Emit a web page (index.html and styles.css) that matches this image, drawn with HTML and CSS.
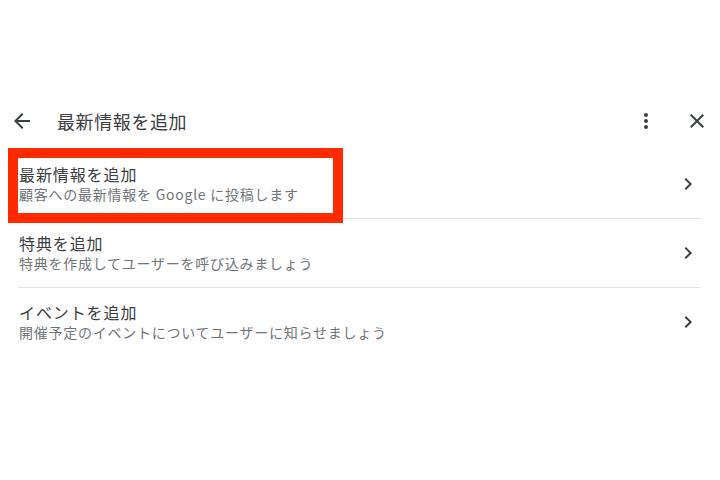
FILE: index.html
```html
<!DOCTYPE html>
<html>
<head>
    <title>最新情報を追加</title>
    <link rel="stylesheet" href="styles.css">
</head>
<body>

    <div class="screen">
        <div class="toolbar">
            <svg class="icon back" viewBox="0 0 24 24"><path d="M20 11H7.83l5.59-5.59L12 4l-8 8 8 8 1.41-1.41L7.83 13H20v-2z"/></svg>
            <div class="toolbar-title">最新情報を追加</div>
            <svg class="icon more" viewBox="0 0 24 24"><path d="M12 8c1.1 0 2-.9 2-2s-.9-2-2-2-2 .9-2 2 .9 2 2 2zm0 2c-1.1 0-2 .9-2 2s.9 2 2 2 2-.9 2-2-.9-2-2-2zm0 6c-1.1 0-2 .9-2 2s.9 2 2 2 2-.9 2-2-.9-2-2-2z"/></svg>
            <svg class="icon close" viewBox="0 0 24 24"><path d="M19 6.41L17.59 5 12 10.59 6.41 5 5 6.41 10.59 12 5 17.59 6.41 19 12 13.41 17.59 19 19 17.59 13.41 12z"/></svg>
        </div>

        <div class="list">
            <div class="item">
                <div class="item-text">
                    <div class="item-title">最新情報を追加</div>
                    <div class="item-sub">顧客への最新情報を Google に投稿します</div>
                </div>
                <svg class="icon chevron" viewBox="0 0 24 24"><path d="M10 6L8.59 7.41 13.17 12l-4.58 4.59L10 18l6-6z"/></svg>
            </div>
            <div class="item">
                <div class="item-text">
                    <div class="item-title">特典を追加</div>
                    <div class="item-sub">特典を作成してユーザーを呼び込みましょう</div>
                </div>
                <svg class="icon chevron" viewBox="0 0 24 24"><path d="M10 6L8.59 7.41 13.17 12l-4.58 4.59L10 18l6-6z"/></svg>
            </div>
            <div class="item">
                <div class="item-text">
                    <div class="item-title">イベントを追加</div>
                    <div class="item-sub">開催予定のイベントについてユーザーに知らせましょう</div>
                </div>
                <svg class="icon chevron" viewBox="0 0 24 24"><path d="M10 6L8.59 7.41 13.17 12l-4.58 4.59L10 18l6-6z"/></svg>
            </div>
        </div>

        <div class="highlight"></div>
    </div>

</body>
</html>
```

FILE: styles.css
```css
body {
    margin: 0;
    background: #fff;
    font-family: "Noto Sans CJK JP", "Noto Sans", sans-serif;
    color: #202124;
}

.screen {
    position: relative;
    width: 720px;
    height: 480px;
    padding-top: 97px;
    box-sizing: border-box;
}

.icon {
    width: 24px;
    height: 24px;
    fill: #3c4043;
    flex-shrink: 0;
}

.toolbar {
    display: flex;
    align-items: center;
    height: 48px;
    padding: 0 11px 0 10px;
}

.toolbar-title {
    flex: 1;
    margin-left: 23px;
    font-size: 18px;
    letter-spacing: 0.6px;
    color: #3c4043;
}

.more {
    margin-right: 27px;
}

.list {
    margin-top: 5px;
    padding: 0 20px 0 18px;
}

.item {
    display: flex;
    align-items: center;
    height: 68px;
    border-bottom: 1px solid #e3e3e3;
}

.item:last-child {
    border-bottom: none;
}

.item-text {
    flex: 1;
    padding-left: 1px;
}

.item-title {
    font-size: 16px;
    line-height: 21px;
    letter-spacing: 0.9px;
    color: #3c4043;
}

.item-sub {
    font-size: 14px;
    line-height: 19px;
    color: #70757a;
    letter-spacing: 0.75px;
}

.highlight {
    position: absolute;
    left: 8px;
    top: 148px;
    width: 335px;
    height: 75px;
    border: 10px solid #ff2a00;
    box-sizing: border-box;
}
```
